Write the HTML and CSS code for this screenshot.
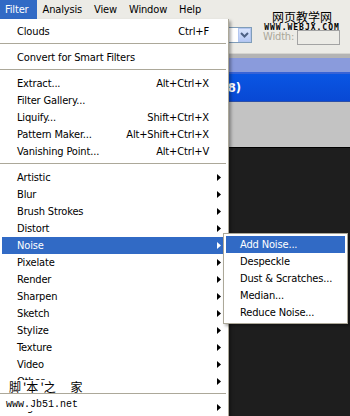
FILE: index.html
```html
<!DOCTYPE html>
<html lang="en">
<head>
    <meta charset="UTF-8">
    <title>Filter Menu</title>
    <link rel="stylesheet" href="styles.css">
</head>
<body>
    <div class="app">
        <div class="menubar">
            <span class="mb-item active">Filter</span>
            <span class="mb-item">Analysis</span>
            <span class="mb-item">View</span>
            <span class="mb-item">Window</span>
            <span class="mb-item">Help</span>
        </div>

        <div class="toolbar">
            <div class="select">
                <span class="select-btn">
                    <svg width="9" height="6" viewBox="0 0 9 6"><path d="M1 1L4.5 4.5L8 1" fill="none" stroke="#4d6185" stroke-width="2"/></svg>
                </span>
            </div>
            <span class="tb-label">Width:</span>
            <span class="tb-field"></span>
        </div>

        <div class="doc-title">
            <div class="title-gap"></div>
            <div class="title-light"></div>
            <div class="title-main"><span class="title-text">8)</span></div>
        </div>
        <div class="doc-gray"></div>
        <div class="canvas"></div>

        <div class="mark-top">
            <div class="mark-cn">网页教学网</div>
            <div class="mark-url">WWW.WEBJX.COM</div>
        </div>

        <ul class="menu">
            <li class="item"><span>Clouds</span><span class="key">Ctrl+F</span></li>
            <li class="sep"></li>
            <li class="item"><span>Convert for Smart Filters</span></li>
            <li class="sep"></li>
            <li class="item"><span>Extract...</span><span class="key">Alt+Ctrl+X</span></li>
            <li class="item"><span>Filter Gallery...</span></li>
            <li class="item"><span>Liquify...</span><span class="key">Shift+Ctrl+X</span></li>
            <li class="item"><span>Pattern Maker...</span><span class="key">Alt+Shift+Ctrl+X</span></li>
            <li class="item"><span>Vanishing Point...</span><span class="key">Alt+Ctrl+V</span></li>
            <li class="sep"></li>
            <li class="item"><span>Artistic</span><span></span><span class="arrow"><svg width="4" height="7"><path d="M0 0L4 3.5L0 7z"/></svg></span></li>
            <li class="item"><span>Blur</span><span></span><span class="arrow"><svg width="4" height="7"><path d="M0 0L4 3.5L0 7z"/></svg></span></li>
            <li class="item"><span>Brush Strokes</span><span></span><span class="arrow"><svg width="4" height="7"><path d="M0 0L4 3.5L0 7z"/></svg></span></li>
            <li class="item"><span>Distort</span><span></span><span class="arrow"><svg width="4" height="7"><path d="M0 0L4 3.5L0 7z"/></svg></span></li>
            <li class="item active"><span>Noise</span><span></span><span class="arrow"><svg width="4" height="7"><path d="M0 0L4 3.5L0 7z"/></svg></span></li>
            <li class="item"><span>Pixelate</span><span></span><span class="arrow"><svg width="4" height="7"><path d="M0 0L4 3.5L0 7z"/></svg></span></li>
            <li class="item"><span>Render</span><span></span><span class="arrow"><svg width="4" height="7"><path d="M0 0L4 3.5L0 7z"/></svg></span></li>
            <li class="item"><span>Sharpen</span><span></span><span class="arrow"><svg width="4" height="7"><path d="M0 0L4 3.5L0 7z"/></svg></span></li>
            <li class="item"><span>Sketch</span><span></span><span class="arrow"><svg width="4" height="7"><path d="M0 0L4 3.5L0 7z"/></svg></span></li>
            <li class="item"><span>Stylize</span><span></span><span class="arrow"><svg width="4" height="7"><path d="M0 0L4 3.5L0 7z"/></svg></span></li>
            <li class="item"><span>Texture</span><span></span><span class="arrow"><svg width="4" height="7"><path d="M0 0L4 3.5L0 7z"/></svg></span></li>
            <li class="item"><span>Video</span><span></span><span class="arrow"><svg width="4" height="7"><path d="M0 0L4 3.5L0 7z"/></svg></span></li>
            <li class="item"><span>Other</span><span></span><span class="arrow"><svg width="4" height="7"><path d="M0 0L4 3.5L0 7z"/></svg></span></li>
            <li class="sep"></li>
            <li class="item"><span>Digimarc</span><span></span><span class="arrow"><svg width="4" height="7"><path d="M0 0L4 3.5L0 7z"/></svg></span></li>
        </ul>

        <ul class="submenu">
            <li class="sub-item active">Add Noise...</li>
            <li class="sub-item">Despeckle</li>
            <li class="sub-item">Dust &amp; Scratches...</li>
            <li class="sub-item">Median...</li>
            <li class="sub-item">Reduce Noise...</li>
        </ul>

        <div class="mark-cn2">脚<span class="tick">'</span>本<span class="tick">'</span>之 家</div>
        <div class="mark-jb">www.Jb51.net</div>
    </div>
</body>
</html>
```

FILE: styles.css
```css
/* Reset */
* {
    margin: 0;
    padding: 0;
    box-sizing: border-box;
}

body {
    width: 350px;
    height: 416px;
    overflow: hidden;
    font-family: 'DejaVu Sans Condensed', 'DejaVu Sans', sans-serif;
    font-size: 11px;
    letter-spacing: -0.15px;
    color: #000;
    background: #1e1e1e;
}

.app {
    position: relative;
    width: 350px;
    height: 416px;
    display: flex;
    flex-direction: column;
    overflow: hidden;
}

/* Menu bar */
.menubar {
    height: 19px;
    display: flex;
    background: #ecebe6;
}

.mb-item {
    padding: 0 6px;
    line-height: 19px;
    color: #000;
}

.mb-item:first-child {
    padding-left: 5px;
    padding-right: 8px;
}

.mb-item.active {
    background: #316ac5;
    color: #fff;
}

/* Options bar */
.toolbar {
    height: 35px;
    display: flex;
    align-items: flex-start;
    padding: 8px 0 0 200px;
    background: #ecebe6;
    border-bottom: 1px solid #d6d5d0;
}

.select {
    width: 52px;
    height: 16px;
    display: flex;
    justify-content: flex-end;
    background: #fff;
    border: 1px solid #7f9db9;
}

.select-btn {
    width: 13px;
    height: 14px;
    display: flex;
    align-items: center;
    justify-content: center;
    background: linear-gradient(#d9e4fd, #b5c8f5);
    border: 1px solid #b3c6ef;
}

.tb-label {
    margin: 3px 0 0 11px;
    color: #aaa79a;
}

.tb-field {
    width: 43px;
    height: 15px;
    margin: 3px 0 0 3px;
    border: 1px solid #a3a3a3;
    background: #ecebe6;
}

/* Document window title */
.doc-title {
    display: flex;
    flex-direction: column;
}

.title-gap {
    height: 4px;
    background: #b4b4b4;
}

.title-light {
    height: 16px;
    background: #8a9bdc;
    border-bottom: 2px solid #3863d6;
}

.title-main {
    height: 28px;
    display: flex;
    align-items: center;
    background: linear-gradient(#0a56e3, #0848d4);
    border-bottom: 1px solid #2b4fa8;
}

.title-text {
    width: 241px;
    text-align: right;
    white-space: nowrap;
    color: #fff;
    font-weight: bold;
    font-size: 13px;
}

.doc-gray {
    height: 46px;
    background: #c3c3c3;
    border-bottom: 1px solid #000;
}

.canvas {
    flex: 1;
    background: #1e1e1e;
}

/* Watermark, top right */
.mark-top {
    position: absolute;
    top: 9px;
    left: 262px;
    width: 80px;
    display: flex;
    flex-direction: column;
    align-items: center;
    letter-spacing: 0;
}

.mark-cn {
    font-family: 'Noto Sans CJK SC', sans-serif;
    font-size: 12px;
    line-height: 15px;
    color: #000;
}

.mark-url {
    font-family: 'DejaVu Sans Mono', monospace;
    font-weight: bold;
    font-size: 8px;
    line-height: 8px;
    letter-spacing: 1px;
    color: #000;
}

/* Filter dropdown */
.menu {
    position: absolute;
    top: 19px;
    left: 0;
    width: 229px;
    height: 420px;
    list-style: none;
    padding-top: 4px;
    background: #fff;
    border-right: 1px solid #aca899;
    box-shadow: 2px 2px 3px rgba(0, 0, 0, 0.35);
}

.item {
    height: 17px;
    margin: 0 2px;
    padding-left: 15px;
    display: grid;
    grid-template-columns: 1fr auto 17px;
    align-items: center;
    white-space: nowrap;
}

.item.active {
    background: #316ac5;
    color: #fff;
}

.arrow {
    display: flex;
    padding-left: 8px;
}

.arrow svg {
    fill: currentColor;
}

.sep {
    height: 1px;
    margin: 3px 2px 5px 0;
    background: #aca899;
}

/* Noise submenu */
.submenu {
    position: absolute;
    top: 233px;
    left: 223px;
    width: 125px;
    list-style: none;
    padding: 2px;
    background: #fff;
    border: 1px solid #aca899;
    box-shadow: 2px 2px 3px rgba(0, 0, 0, 0.35);
}

.sub-item {
    height: 17px;
    line-height: 17px;
    padding-left: 14px;
    white-space: nowrap;
}

.sub-item.active {
    background: #316ac5;
    color: #fff;
}

/* Watermarks, bottom left */
.mark-cn2 {
    position: absolute;
    top: 380px;
    left: 7px;
    padding: 0 2px;
    font-family: 'Noto Sans CJK SC', sans-serif;
    font-size: 12px;
    line-height: 13px;
    letter-spacing: 6px;
    background: #fff;
}

.tick {
    letter-spacing: 0;
    margin-left: -4px;
}

.mark-jb {
    position: absolute;
    top: 399px;
    left: 6px;
    font-family: 'Liberation Mono', monospace;
    font-size: 10px;
    line-height: 12px;
    letter-spacing: 0;
    background: #fff;
}
```
